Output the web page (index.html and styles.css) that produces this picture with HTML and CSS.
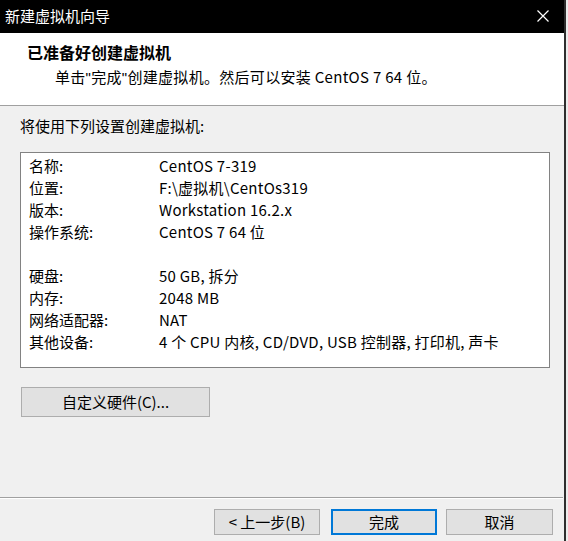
FILE: index.html
```
<!DOCTYPE html>
<html lang="zh-CN">
<head>
<meta charset="utf-8">
<title>新建虚拟机向导</title>
<link rel="stylesheet" href="styles.css">
</head>
<body>
<div class="screen">
  <div class="window">
    <div class="titlebar">
      <span class="title">新建虚拟机向导</span>
      <svg class="close" width="12" height="12" viewBox="0 0 12 12"><path d="M0.5 0.5 L11.5 11.5 M11.5 0.5 L0.5 11.5" stroke="#fff" stroke-width="1.2" fill="none"/></svg>
    </div>
    <div class="header">
      <div class="heading">已准备好创建虚拟机</div>
      <div class="subtitle">单击<span class="q">"</span>完成<span class="q">"</span>创建虚拟机。然后可以安装 CentOS 7 64 位。</div>
    </div>
    <div class="content">
      <div class="intro">将使用下列设置创建虚拟机:</div>
      <div class="summary">
        <div class="row"><span class="label">名称:</span><span class="value">CentOS 7-319</span></div>
        <div class="row"><span class="label">位置:</span><span class="value">F:\虚拟机\CentOs319</span></div>
        <div class="row"><span class="label">版本:</span><span class="value">Workstation 16.2.x</span></div>
        <div class="row"><span class="label">操作系统:</span><span class="value">CentOS 7 64 位</span></div>
        <div class="row"></div>
        <div class="row"><span class="label">硬盘:</span><span class="value">50 GB, 拆分</span></div>
        <div class="row"><span class="label">内存:</span><span class="value">2048 MB</span></div>
        <div class="row"><span class="label">网络适配器:</span><span class="value">NAT</span></div>
        <div class="row"><span class="label">其他设备:</span><span class="value">4 个 CPU 内核, CD/DVD, USB 控制器, 打印机, 声卡</span></div>
      </div>
      <div class="btn custom">自定义硬件(C)...</div>
    </div>
    <div class="footer">
      <div class="btn back">&lt; 上一步(B)</div>
      <div class="btn finish">完成</div>
      <div class="btn cancel">取消</div>
    </div>
  </div>
  <div class="edge"></div>
</div>
</body>
</html>
```
FILE: styles.css
```
html, body {
  margin: 0;
  padding: 0;
  background: #f0f0f0;
  overflow: hidden;
}
body {
  font-family: "Noto Sans CJK SC", "Noto Sans", sans-serif;
  font-size: 15px;
  color: #000;
}
.screen {
  display: flex;
  width: 568px;
  height: 541px;
}
.window {
  width: 564px;
  flex: none;
  display: flex;
  flex-direction: column;
  background: #f0f0f0;
}
.edge {
  flex: none;
  width: 2px;
  background: #2e2e2e;
  border-right: 2px solid #ececec;
}
.titlebar {
  height: 33px;
  background: #000;
  color: #fff;
  display: flex;
  align-items: center;
  justify-content: space-between;
  padding: 0 15px 0 5px;
  box-sizing: border-box;
}
.title {
  font-size: 15px;
  line-height: 20px;
  margin-top: -1px;
}
.close {
  display: block;
  margin-top: -2px;
}
.header {
  height: 73px;
  box-sizing: border-box;
  background: #fff;
  border-bottom: 1px solid #a0a0a0;
  padding: 9px 0 0 27px;
}
.heading {
  font-weight: bold;
  font-size: 16px;
  line-height: 20px;
}
.subtitle {
  margin-top: 5px;
  margin-left: 28px;
  line-height: 20px;
  letter-spacing: 0.3px;
}
.q {
  font-family: "Liberation Sans", sans-serif;
}
.content {
  height: 391px;
  box-sizing: border-box;
  padding: 10px 0 0 20px;
}
.intro {
  line-height: 20px;
}
.summary {
  margin-top: 16px;
  width: 530px;
  height: 216px;
  box-sizing: border-box;
  border: 1px solid #828282;
  background: #fff;
  padding: 2px 8px;
}
.row {
  display: flex;
  height: 22px;
  line-height: 22px;
  white-space: nowrap;
}
.label {
  width: 130px;
  flex: none;
}
.value {
  letter-spacing: 0.25px;
}
.btn {
  box-sizing: border-box;
  background: #e1e1e1;
  border: 1px solid #adadad;
  display: flex;
  align-items: center;
  justify-content: center;
  line-height: 20px;
}
.custom {
  margin-top: 19px;
  margin-left: 1px;
  width: 189px;
  height: 30px;
}
.footer {
  flex: 1;
  border-top: 1px solid #a0a0a0;
  box-shadow: inset 0 1px 0 #ffffff;
  display: flex;
  justify-content: flex-end;
  align-items: flex-start;
  padding: 11px 10px 0 0;
  margin-right: 1px;
}
.footer .btn {
  height: 26px;
}
.back {
  width: 106px;
}
.finish {
  width: 106px;
  margin-left: 11px;
  border: 2px solid #0078d7;
}
.cancel {
  width: 107px;
  margin-left: 9px;
}
```
